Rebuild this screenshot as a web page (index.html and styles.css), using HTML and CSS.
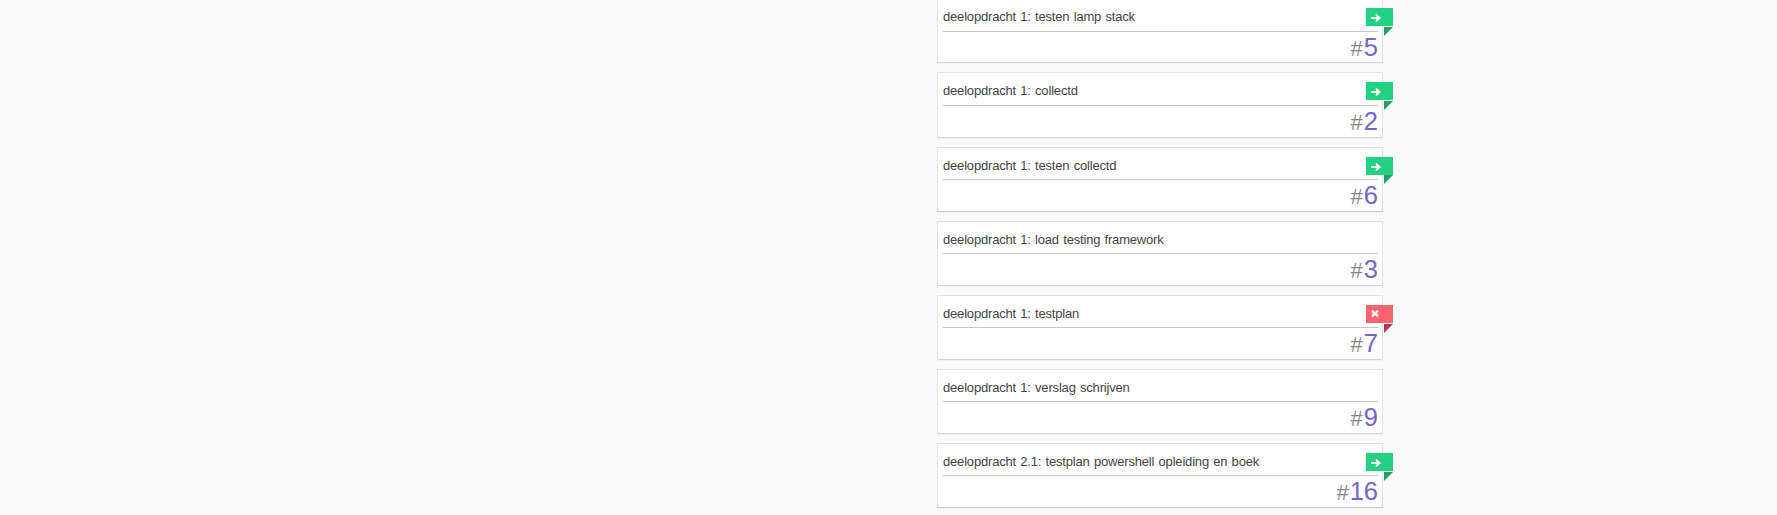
FILE: index.html
```
<!DOCTYPE html>
<html lang="nl">
<head>
<meta charset="utf-8">
<title>Backlog</title>
<link rel="stylesheet" href="styles.css">
</head>
<body>
<main class="board">
<article class="card first"><h2 class="title tall">deelopdracht 1: testen lamp stack</h2><div class="ref"><span class="hash">#</span>5</div><span class="ribbon"><svg class="icon" viewBox="0 0 10 8"><path d="M0 2.9h5.6L4.4 0.8 5.6 0 10 4 5.6 8 4.4 7.2 5.6 5.1H0z"/></svg></span></article>
<article class="card roomy"><h2 class="title tall">deelopdracht 1: collectd</h2><div class="ref"><span class="hash">#</span>2</div><span class="ribbon"><svg class="icon" viewBox="0 0 10 8"><path d="M0 2.9h5.6L4.4 0.8 5.6 0 10 4 5.6 8 4.4 7.2 5.6 5.1H0z"/></svg></span></article>
<article class="card"><h2 class="title">deelopdracht 1: testen collectd</h2><div class="ref"><span class="hash">#</span>6</div><span class="ribbon joined"><svg class="icon" viewBox="0 0 10 8"><path d="M0 2.9h5.6L4.4 0.8 5.6 0 10 4 5.6 8 4.4 7.2 5.6 5.1H0z"/></svg></span></article>
<article class="card"><h2 class="title">deelopdracht 1: load testing framework</h2><div class="ref"><span class="hash">#</span>3</div></article>
<article class="card"><h2 class="title">deelopdracht 1: testplan</h2><div class="ref"><span class="hash">#</span>7</div><span class="ribbon blocked"><svg class="icon" viewBox="0 0 10 8"><path d="M2 0.8l6 5.6M8 0.8l-6 5.6"/></svg></span></article>
<article class="card"><h2 class="title">deelopdracht 1: verslag schrijven</h2><div class="ref"><span class="hash">#</span>9</div></article>
<article class="card"><h2 class="title">deelopdracht 2.1: testplan powershell opleiding en boek</h2><div class="ref"><span class="hash">#</span>16</div><span class="ribbon"><svg class="icon" viewBox="0 0 10 8"><path d="M0 2.9h5.6L4.4 0.8 5.6 0 10 4 5.6 8 4.4 7.2 5.6 5.1H0z"/></svg></span></article>
</main>
</body>
</html>
```
FILE: styles.css
```
* { box-sizing: border-box; }
html { height: 515px; overflow: hidden; }
body {
  margin: 0;
  height: 515px;
  overflow: hidden;
  background: #fafafa;
  font-family: "Liberation Sans", Arial, sans-serif;
}
.board {
  display: flex;
  flex-direction: column;
  gap: 9px;
  width: 446px;
  margin-left: 937px;
}
.card {
  position: relative;
  flex: none;
  height: 65px;
  padding: 0 4px 0 5px;
  background: #fff;
  border: 1px solid #e2e2e2;
  border-bottom-color: #d4d4d4;
  box-shadow: 0 1px 0 #f3f3f3;
}
.first { margin-top: -2px; }
.roomy { height: 66px; }
.title {
  margin: 0;
  height: 32px;
  padding-top: 10px;
  border-bottom: 1px solid #c8c8c8;
  font-size: 13px;
  font-weight: 400;
  line-height: 16px;
  letter-spacing: -0.18px;
  word-spacing: 0.85px;
  white-space: pre;
  color: #444;
}
.tall { height: 33px; }
.ref {
  height: 30px;
  text-align: right;
  font-size: 25.5px;
  line-height: 31px;
  color: #7764cc;
}
.tall + .ref { line-height: 30px; }
.hash {
  font-size: 22px;
  letter-spacing: 1px;
  color: #888;
}
.ribbon {
  position: absolute;
  top: 9px;
  right: -11px;
  width: 27px;
  height: 18px;
  background: #23d185;
}
.ribbon::after {
  content: "";
  position: absolute;
  top: 19px;
  right: 0;
  border-top: 9px solid #1fa267;
  border-right: 9px solid transparent;
}
.joined::after { top: 18px; }
.blocked { background: #fb6370; }
.blocked::after { border-top-color: #b23849; }
.icon {
  position: absolute;
  left: 5px;
  top: 6px;
  width: 10px;
  height: 8px;
  fill: #fff;
}
.blocked .icon {
  top: 5px;
  left: 4px;
  stroke: #fff;
  stroke-width: 2.3;
}
```
